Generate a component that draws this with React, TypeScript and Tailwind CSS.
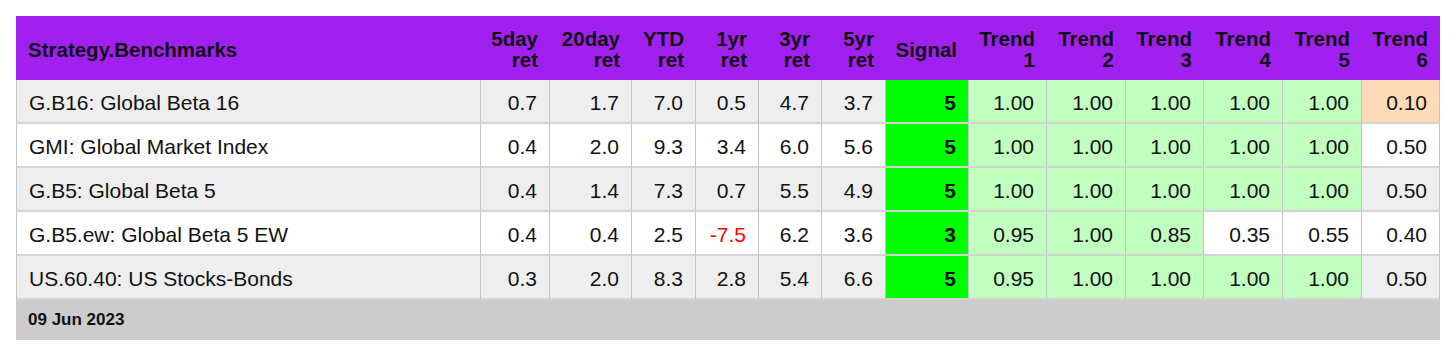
import React from "react";

type Row = {
  name: string;
  rets: number[];
  signal: number;
  trends: number[];
};

const COLS = [
  "Strategy.Benchmarks",
  ["5day", "ret"],
  ["20day", "ret"],
  ["YTD", "ret"],
  ["1yr", "ret"],
  ["3yr", "ret"],
  ["5yr", "ret"],
  "Signal",
  ["Trend", "1"],
  ["Trend", "2"],
  ["Trend", "3"],
  ["Trend", "4"],
  ["Trend", "5"],
  ["Trend", "6"],
] as const;

const ROWS: Row[] = [
  { name: "G.B16: Global Beta 16", rets: [0.7, 1.7, 7.0, 0.5, 4.7, 3.7], signal: 5, trends: [1, 1, 1, 1, 1, 0.1] },
  { name: "GMI: Global Market Index", rets: [0.4, 2.0, 9.3, 3.4, 6.0, 5.6], signal: 5, trends: [1, 1, 1, 1, 1, 0.5] },
  { name: "G.B5: Global Beta 5", rets: [0.4, 1.4, 7.3, 0.7, 5.5, 4.9], signal: 5, trends: [1, 1, 1, 1, 1, 0.5] },
  { name: "G.B5.ew: Global Beta 5 EW", rets: [0.4, 0.4, 2.5, -7.5, 6.2, 3.6], signal: 3, trends: [0.95, 1, 0.85, 0.35, 0.55, 0.4] },
  { name: "US.60.40: US Stocks-Bonds", rets: [0.3, 2.0, 8.3, 2.8, 5.4, 6.6], signal: 5, trends: [0.95, 1, 1, 1, 1, 0.5] },
];

// green when trend is strong, peach when weak, otherwise row stripe
function trendBg(v: number, striped: boolean) {
  if (v >= 0.6) return "bg-[#c1ffc1]";
  if (v <= 0.2) return "bg-[#ffdab9]";
  return striped ? "bg-[#eeeeee]" : "bg-white";
}

export default function App() {
  return (
    <div
      className="min-h-[357px] bg-white px-4 pt-4 text-[#111]"
      style={{ fontFamily: '"Liberation Sans", Arial, sans-serif' }}
    >
      <div className="grid w-[1424px] grid-cols-[465px_69px_82px_64px_63px_63px_64px_83px_78px_79px_78px_79px_79px_78px]">
        {/* Header */}
        {COLS.map((c, i) => (
          <div
            key={i}
            className={`flex h-16 items-center bg-[#a020f0] pt-[2px] text-[20.5px] font-bold leading-[21px] ${
              i === 0 ? "justify-start pl-3" : "justify-end pr-3 text-right"
            }`}
          >
            {typeof c === "string" ? (
              <span>{c}</span>
            ) : (
              <span>
                {c[0]}
                <br />
                {c[1]}
              </span>
            )}
          </div>
        ))}

        {/* Rows */}
        {ROWS.map((r, ri) => {
          const striped = ri % 2 === 0;
          const rowBg = striped ? "bg-[#eeeeee]" : "bg-white";
          const cell = "flex h-11 items-center border-b-2 border-r pt-[4px] text-[21px] border-b-[#d3d3d3] border-r-[#c4c4c4]";
          return (
            <React.Fragment key={r.name}>
              <div className={`${cell} ${rowBg} border-l border-l-[#c4c4c4] pl-3`}>{r.name}</div>
              {r.rets.map((v, i) => (
                <div key={i} className={`${cell} ${rowBg} justify-end pr-3 ${v < 0 ? "text-[#ff0000]" : ""}`}>
                  {v.toFixed(1)}
                </div>
              ))}
              <div className={`${cell} justify-end border-b-[#00ff00] bg-[#00ff00] pr-3 font-bold`}>{r.signal}</div>
              {r.trends.map((v, i) => (
                <div key={i} className={`${cell} ${trendBg(v, striped)} justify-end pr-3`}>
                  {v.toFixed(2)}
                </div>
              ))}
            </React.Fragment>
          );
        })}

        {/* Footer */}
        <div className="col-span-14 flex h-10 items-center bg-[#cccccc] pl-3 text-[17px] font-bold">
          09 Jun 2023
        </div>
      </div>
    </div>
  );
}
